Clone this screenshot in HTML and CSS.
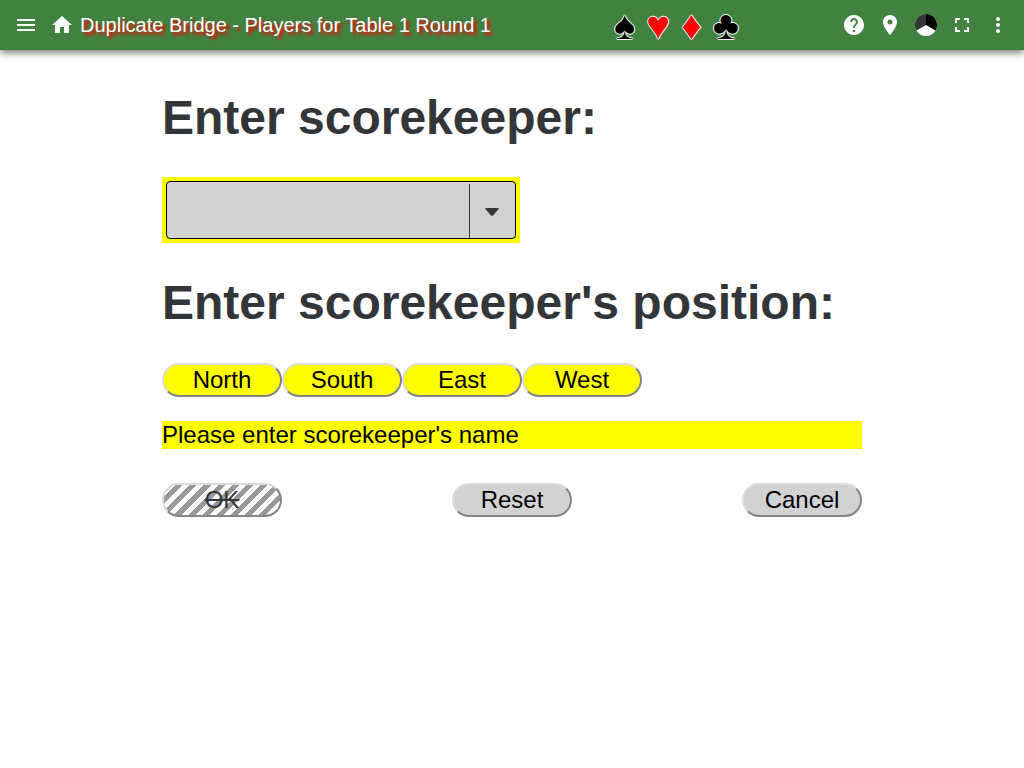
FILE: index.html
```html
<!DOCTYPE html>
<html lang="en">
<head>
<meta charset="utf-8">
<meta name="viewport" content="width=device-width, initial-scale=1">
<title>Duplicate Bridge - Players for Table 1 Round 1</title>
<link rel="stylesheet" href="styles.css">
</head>
<body>
<header class="toolbar">
  <button class="icon-button" type="button" aria-label="Menu">
    <svg viewBox="0 0 24 24"><path d="M3 18h18v-2H3v2zm0-5h18v-2H3v2zm0-7v2h18V6H3z"/></svg>
  </button>
  <button class="icon-button" type="button" aria-label="Home">
    <svg viewBox="0 0 24 24"><path d="M10 20v-6h4v6h5v-8h3L12 3 2 12h3v8z"/></svg>
  </button>
  <div class="title">Duplicate Bridge - Players for Table 1 Round 1</div>
  <div class="suits"><span>♠</span> <span class="red">♥</span> <span class="red">♦</span> <span>♣</span></div>
  <div class="actions">
    <button class="icon-button" type="button" aria-label="Help">
      <svg viewBox="0 0 24 24"><path d="M12 2C6.48 2 2 6.48 2 12s4.480 10 10 10 10-4.480 10-10S17.520 2 12 2zm1 17h-2v-2h2v2zm2.070-7.750l-.9.920C13.450 12.900 13 13.500 13 15h-2v-.5c0-1.100.450-2.100 1.170-2.830l1.240-1.260c.370-.360.590-.860.590-1.410 0-1.100-.9-2-2-2s-2 .9-2 2H8c0-2.210 1.790-4 4-4s4 1.790 4 4c0 .880-.360 1.680-.930 2.250z"/></svg>
    </button>
    <button class="icon-button" type="button" aria-label="Location">
      <svg viewBox="0 0 24 24"><path d="M12 2C8.130 2 5 5.130 5 9c0 5.250 7 13 7 13s7-7.750 7-13c0-3.870-3.130-7-7-7zm0 9.500c-1.380 0-2.500-1.120-2.500-2.500s1.120-2.500 2.500-2.500 2.500 1.120 2.500 2.500-1.120 2.500-2.500 2.500z"/></svg>
    </button>
    <button class="icon-button" type="button" aria-label="Theme">
      <svg viewBox="0 0 24 24"><circle cx="12" cy="12" r="11"/><path fill="#323639" d="M12 12V1a11 11 0 0 0-9.530 16.500z"/><path fill="#000" d="M12 12V1a11 11 0 0 1 9.530 16.500z"/></svg>
    </button>
    <button class="icon-button" type="button" aria-label="Full screen">
      <svg viewBox="0 0 24 24"><path d="M7 14H5v5h5v-2H7v-3zm-2-4h2V7h3V5H5v5zm12 7h-3v2h5v-5h-2v3zM14 5v2h3v3h2V5h-5z"/></svg>
    </button>
    <button class="icon-button" type="button" aria-label="More options">
      <svg viewBox="0 0 24 24"><path d="M12 8c1.100 0 2-.9 2-2s-.9-2-2-2-2 .9-2 2 .9 2 2 2zm0 2c-1.100 0-2 .9-2 2s.9 2 2 2 2-.9 2-2-.9-2-2-2zm0 6c-1.100 0-2 .9-2 2s.9 2 2 2 2-.9 2-2-.9-2-2-2z"/></svg>
    </button>
  </div>
</header>
<main class="content">
  <h1 class="heading"><label for="scorekeeper">Enter scorekeeper:</label></h1>
  <div class="highlight">
    <div class="combo">
      <input class="combo-input" id="scorekeeper" type="text">
      <button class="combo-toggle" type="button" aria-label="Show names">
        <svg viewBox="0 0 14 8"><path d="M1 0h12q1 0 .6.900L8 7.400q-1 .8-2 0L.4.900Q0 0 1 0z"/></svg>
      </button>
    </div>
  </div>
  <h1 class="heading">Enter scorekeeper's position:</h1>
  <div class="positions">
    <button class="pill pill-yellow" type="button">North</button>
    <button class="pill pill-yellow" type="button">South</button>
    <button class="pill pill-yellow" type="button">East</button>
    <button class="pill pill-yellow" type="button">West</button>
  </div>
  <div class="message">Please enter scorekeeper's name</div>
  <div class="decisions">
    <button class="pill pill-disabled" type="button" disabled>OK</button>
    <button class="pill" type="button">Reset</button>
    <button class="pill" type="button">Cancel</button>
  </div>
</main>
</body>
</html>
```

FILE: styles.css
```css
* {
  box-sizing: border-box;
}

body {
  margin: 0;
  background: #fff;
  color: #323639;
  font-family: "Liberation Sans", Arial, sans-serif;
  font-size: 24px;
}

.toolbar {
  display: flex;
  align-items: center;
  height: 50px;
  padding: 0 8px;
  background: #418241;
  box-shadow: 0 2px 8px rgba(0, 0, 0, 0.6);
  color: #fff;
}

.icon-button {
  display: flex;
  align-items: center;
  justify-content: center;
  width: 36px;
  height: 36px;
  padding: 0;
  border: 0;
  background: none;
  cursor: pointer;
}

.icon-button svg {
  width: 24px;
  height: 24px;
  fill: #fff;
}

.title {
  margin-right: 26px;
  font-size: 20px;
  white-space: nowrap;
  text-shadow: 3px 3px 3px #f00;
}

.suits {
  margin: 0 auto;
  color: #000;
  font-size: 40px;
  line-height: 48px;
  white-space: nowrap;
  text-shadow: -1px 0 #fff, 1px 0 #fff, 0 -1px #fff, 0 1px #fff;
}

.red {
  color: #f00;
}

.actions {
  display: flex;
}

.content {
  max-width: 700px;
  margin: 40px auto 0;
}

.heading {
  margin: 0 0 32px;
  font-size: 48px;
  line-height: 55px;
}

.highlight {
  width: fit-content;
  max-width: 100%;
  margin-bottom: 32px;
  padding: 4px;
  background: #ff0;
}

.combo {
  display: flex;
  width: 350px;
  max-width: 100%;
  height: 58px;
  overflow: hidden;
  border: 1px solid #000;
  border-radius: 4px;
  background: #d2d2d2;
}

.combo-input {
  flex: 1;
  min-width: 0;
  padding: 0 8px;
  border: 0;
  outline: 0;
  background: none;
  font: inherit;
}

.combo-toggle {
  display: flex;
  align-items: center;
  justify-content: center;
  width: 46px;
  margin-top: 2px;
  padding: 2px 2px 0 0;
  border: 0;
  border-left: 1px solid #323639;
  background: none;
}

.combo-toggle svg {
  width: 14px;
  height: 8px;
  fill: #323639;
}

.positions {
  display: flex;
  padding-top: 1px;
  margin-bottom: 24px;
}

.pill {
  width: 120px;
  height: 34px;
  padding: 0;
  border: 2px solid;
  border-color: #dcdcdc #848484 #848484 #dcdcdc;
  border-radius: 17px;
  background: #d2d2d2;
  color: #000;
  font: inherit;
}

.pill-yellow {
  background: #ff0;
}

.pill-disabled {
  background: repeating-linear-gradient(-45deg, #999 0 5px, #fff 5px 10px);
  color: #323639;
  text-decoration: line-through;
}

.message {
  margin-bottom: 34px;
  background: #ff0;
  color: #000;
  line-height: 28px;
}

.decisions {
  display: flex;
  justify-content: space-between;
}
```
